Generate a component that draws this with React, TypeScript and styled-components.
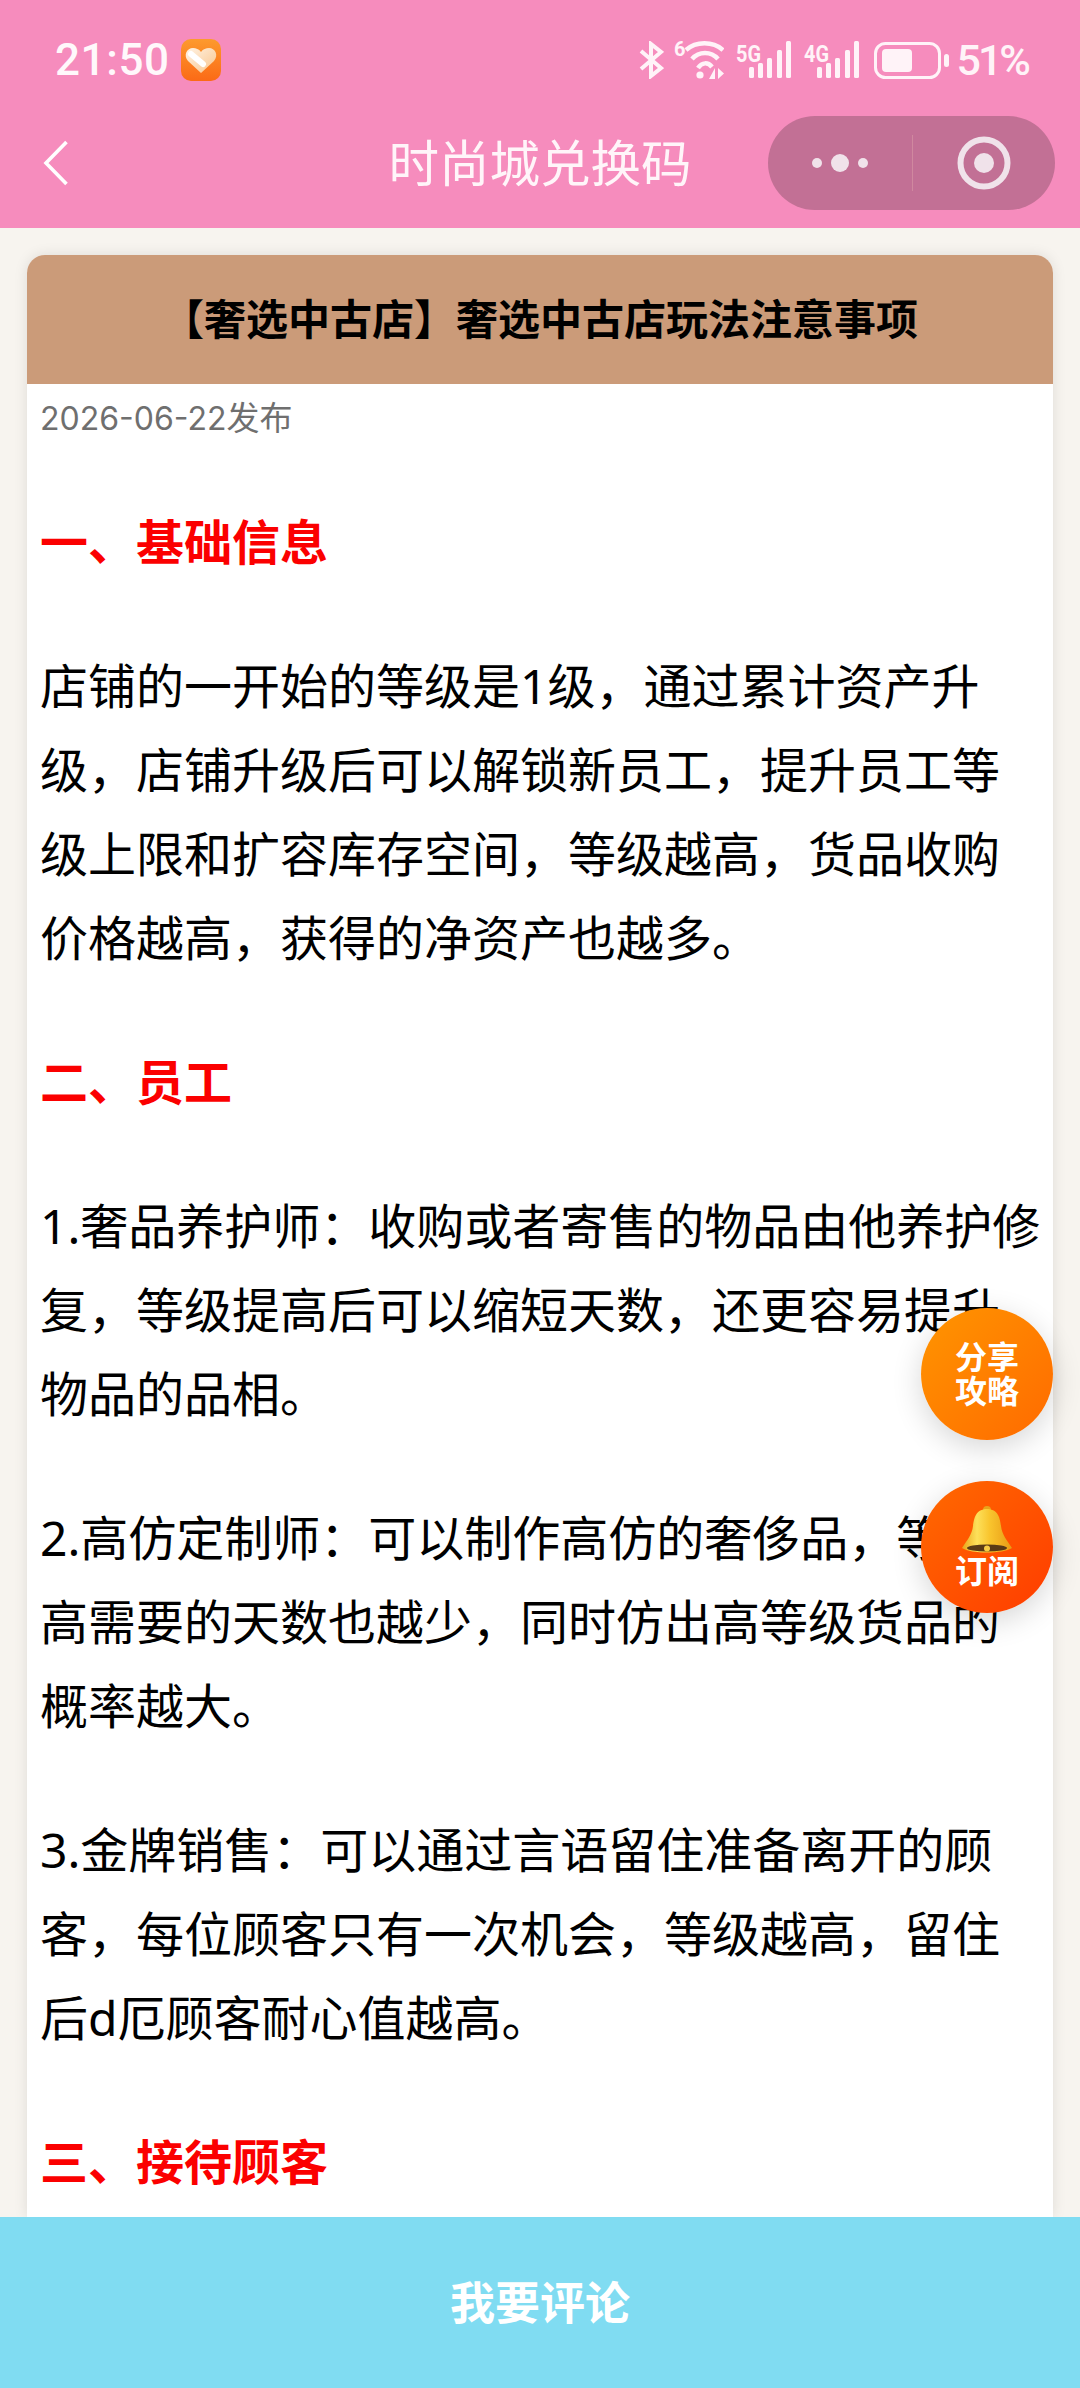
import React from 'react';
import styled, { createGlobalStyle } from 'styled-components';

const GlobalStyle = createGlobalStyle`
    html, body {
        margin: 0;
        padding: 0;
        background: #f7f4ef;
    }
    * {
        box-sizing: border-box;
    }
`;

const Page = styled('div')`
    position: relative;
    width: 1080px;
    height: 2388px;
    display: flex;
    flex-direction: column;
    overflow: hidden;
    background-color: #f7f4ef;
    font-family: 'Noto Sans', 'Noto Sans CJK SC', sans-serif;
`;

const TopArea = styled('header')`
    height: 228px;
    flex: none;
    background-color: #f68cbd;
    color: #ffffff;
`;

const StatusBar = styled('div')`
    height: 114px;
    padding: 6px 52px 0 55px;
    display: flex;
    align-items: center;
    justify-content: space-between;
`;

const TimeGroup = styled('div')`
    display: flex;
    align-items: center;
    gap: 11px;
`;

const Time = styled('span')`
    font-family: 'Roboto', sans-serif;
    font-size: 44px;
    font-weight: 500;
    letter-spacing: 0.6px;
    color: #fff8fb;
`;

const StatusIcons = styled('div')`
    display: flex;
    align-items: center;
`;

const IconSlot = styled('span')<{ $gap: number }>`
    display: flex;
    margin-left: ${(p) => p.$gap}px;
`;

const Percent = styled('span')`
    font-family: 'Roboto', sans-serif;
    font-size: 43px;
    font-weight: 500;
    letter-spacing: -3px;
    color: #fff3f8;
    margin-left: 7px;
`;

const NavBar = styled('div')`
    height: 114px;
    padding: 0 25px 16px;
    display: grid;
    grid-template-columns: 1fr auto 1fr;
    align-items: center;
`;

const BackLink = styled('span')`
    display: flex;
    margin-left: 18px;
`;

const NavTitle = styled('h1')`
    margin: 0;
    font-size: 50.5px;
    font-weight: 400;
    line-height: 60px;
    color: #fff5f9;
`;

const Capsule = styled('div')`
    justify-self: end;
    width: 287px;
    height: 94px;
    border-radius: 47px;
    background-color: #c27095;
    display: grid;
    grid-template-columns: 144px 1px 1fr;
    align-items: center;
    justify-items: center;
`;

const CapsuleLine = styled('span')`
    width: 1px;
    height: 56px;
    background-color: #d0889f;
`;

const Card = styled('main')`
    flex: 1;
    min-height: 0;
    margin: 27px 27px 0;
    border-radius: 18px 18px 0 0;
    background-color: #ffffff;
    box-shadow: 0 0 14px rgba(0, 0, 0, 0.1);
    overflow: hidden;
`;

const CardHeader = styled('div')`
    height: 129px;
    padding-bottom: 6px;
    background-color: #cb9b79;
    display: flex;
    align-items: center;
    justify-content: center;
`;

const CardTitle = styled('h2')`
    margin: 0;
    font-size: 42px;
    font-weight: 700;
    color: #000000;
`;

const Body = styled('div')`
    padding: 12px 8px 0 13px;
`;

const DateLine = styled('div')`
    font-size: 33px;
    line-height: 44px;
    color: #6f6f6f;
    margin-bottom: 59px;
`;

const DateDigits = styled('span')`
    font-family: 'Inter', sans-serif;
    font-size: 32px;
`;

const Heading = styled('h3')`
    margin: 0 0 60px;
    font-size: 48px;
    font-weight: 700;
    line-height: 84px;
    color: #fb0000;
`;

const Paragraph = styled('p')`
    margin: 0 0 60px;
    font-size: 48px;
    line-height: 84px;
    color: #000000;
`;

const BottomBar = styled('div')`
    height: 171px;
    flex: none;
    padding-bottom: 4px;
    background-color: #80dcf2;
    color: #ffffff;
    font-size: 45px;
    font-weight: 700;
    display: flex;
    align-items: center;
    justify-content: center;
`;

const FloatButton = styled('div')<{ $top: number; $from: string; $to: string }>`
    position: absolute;
    right: 27px;
    top: ${(p) => p.$top}px;
    width: 132px;
    height: 132px;
    padding-bottom: 1px;
    border-radius: 50%;
    background: linear-gradient(135deg, ${(p) => p.$from}, ${(p) => p.$to});
    box-shadow: 0 8px 30px rgba(0, 0, 0, 0.16);
    color: #ffffff;
    font-size: 32px;
    font-weight: 700;
    line-height: 34px;
    display: flex;
    flex-direction: column;
    align-items: center;
    justify-content: center;
    text-align: center;
`;

const BackIcon = () => (
    <svg width="25" height="46" viewBox="0 0 25 46" fill="none">
        <path d="M23.5 2 L3 23 L23.5 44" stroke="#fff" strokeWidth="3.6" />
    </svg>
);

const HeartLogo = () => (
    <svg width="40" height="42" viewBox="0 0 40 42">
        <defs>
            <linearGradient id="logoBg" x1="0" y1="0" x2="0" y2="1">
                <stop offset="0" stopColor="#fd9a2e" />
                <stop offset="1" stopColor="#fb6a16" />
            </linearGradient>
            <linearGradient id="logoHeart" x1="0" y1="0" x2="1" y2="1">
                <stop offset="0" stopColor="#fff3e4" />
                <stop offset="1" stopColor="#f8c48c" />
            </linearGradient>
        </defs>
        <rect width="40" height="42" rx="10" fill="url(#logoBg)" />
        <path
            d="M20 34 L7 22 C2 16 6 9 12 9 C15 9 18 10 20 13 C22 10 25 9 28 9 C34 9 38 16 33 22 Z"
            fill="url(#logoHeart)"
        />
        <path d="M10 15 L22 25" stroke="#ffffff" strokeWidth="6" strokeLinecap="round" />
    </svg>
);

const Bluetooth = () => (
    <svg width="25" height="38" viewBox="0 0 25 38" fill="none">
        <path d="M2 10 L22 27 L12 35 V3 L22 11 L2 28" stroke="#fff3f8" strokeWidth="4" />
    </svg>
);

const Wifi = () => (
    <svg width="51" height="40" viewBox="0 0 51 40" fill="none">
        <text x="1" y="16" fontSize="20" fontWeight="700" fontFamily="Roboto" fill="#fff3f8">
            6
        </text>
        <path d="M13 10 C23 1 40 1 50 10" stroke="#fff3f8" strokeWidth="4.5" />
        <path d="M19 19 C26 11 38 11 45 19" stroke="#fff3f8" strokeWidth="4.5" />
        <path d="M25 28 C29 22 35 22 39 27" stroke="#fff3f8" strokeWidth="4.5" />
        <circle cx="27" cy="35" r="3.6" fill="#fff3f8" />
        <path d="M42 28 V39 H36 Z M45 28 V39 L51 33.5 Z" fill="#fff3f8" />
    </svg>
);

const Signal = ({ label }: { label: string }) => (
    <svg width="57" height="38" viewBox="0 0 57 38">
        <text
            x="1"
            y="21"
            fontSize="24"
            fontWeight="700"
            fontFamily="Roboto"
            fill="#fff3f8"
            textLength="25"
            lengthAdjust="spacingAndGlyphs"
        >
            {label}
        </text>
        <rect x="14" y="26" width="5" height="11" rx="1.5" fill="#fff3f8" />
        <rect x="23" y="22" width="5" height="15" rx="1.5" fill="#fff3f8" />
        <rect x="32" y="17" width="5" height="20" rx="1.5" fill="#fff3f8" />
        <rect x="42" y="9" width="5" height="28" rx="1.5" fill="#fff3f8" />
        <rect x="51" y="0" width="5" height="37" rx="1.5" fill="#fff3f8" />
    </svg>
);

const Battery = () => (
    <svg width="75" height="37" viewBox="0 0 75 37" fill="none">
        <rect x="1.5" y="1.5" width="64" height="34" rx="10" stroke="#fff3f8" strokeWidth="3" />
        <rect x="8" y="7" width="30" height="23" rx="4" fill="#fff3f8" />
        <rect x="70" y="12" width="5" height="13" rx="2.5" fill="#fff3f8" />
    </svg>
);

const MoreDots = () => (
    <svg width="56" height="20" viewBox="0 0 56 20" fill="#f0e2ea">
        <circle cx="5" cy="10" r="5" />
        <circle cx="28" cy="10" r="9" />
        <circle cx="51" cy="10" r="5" />
    </svg>
);

const RecordIcon = () => (
    <svg width="54" height="54" viewBox="0 0 54 54" fill="none">
        <circle cx="27" cy="27" r="23.5" stroke="#f0e2ea" strokeWidth="6" />
        <circle cx="27" cy="27" r="10" fill="#f0e2ea" />
    </svg>
);

const Bell = () => (
    <svg width="50" height="48" viewBox="0 0 50 48">
        <defs>
            <linearGradient id="bellBody" x1="0" y1="0" x2="1" y2="0">
                <stop offset="0" stopColor="#e9a51a" />
                <stop offset="0.3" stopColor="#fde05a" />
                <stop offset="0.55" stopColor="#f9c52e" />
                <stop offset="1" stopColor="#e89a14" />
            </linearGradient>
        </defs>
        <circle cx="25" cy="4" r="4" fill="#e9a31c" />
        <path
            d="M25 3 C14 3 12 12 11 20 C10 29 5 34 0 42 C9 48 41 48 50 42 C45 34 40 29 39 20 C38 12 36 3 25 3 Z"
            fill="url(#bellBody)"
        />
        <ellipse cx="25" cy="42" rx="20" ry="3.6" fill="#5a3a16" />
        <circle cx="25" cy="42.5" r="3" fill="#f6cc45" />
    </svg>
);

const App = () => {
    return (
        <Page>
            <GlobalStyle />
            <TopArea>
                <StatusBar>
                    <TimeGroup>
                        <Time>21:50</Time>
                        <HeartLogo />
                    </TimeGroup>
                    <StatusIcons>
                        <Bluetooth />
                        <IconSlot $gap={9}>
                            <Wifi />
                        </IconSlot>
                        <IconSlot $gap={11}>
                            <Signal label="5G" />
                        </IconSlot>
                        <IconSlot $gap={11}>
                            <Signal label="4G" />
                        </IconSlot>
                        <IconSlot $gap={14}>
                            <Battery />
                        </IconSlot>
                        <Percent>51%</Percent>
                    </StatusIcons>
                </StatusBar>
                <NavBar>
                    <BackLink>
                        <BackIcon />
                    </BackLink>
                    <NavTitle>时尚城兑换码</NavTitle>
                    <Capsule>
                        <MoreDots />
                        <CapsuleLine />
                        <RecordIcon />
                    </Capsule>
                </NavBar>
            </TopArea>
            <Card>
                <CardHeader>
                    <CardTitle>【奢选中古店】奢选中古店玩法注意事项</CardTitle>
                </CardHeader>
                <Body>
                    <DateLine>
                        <DateDigits>2026-06-22</DateDigits>发布
                    </DateLine>
                    <Heading>一、基础信息</Heading>
                    <Paragraph>
                        店铺的一开始的等级是1级，通过累计资产升级，店铺升级后可以解锁新员工，提升员工等级上限和扩容库存空间，等级越高，货品收购价格越高，获得的净资产也越多。
                    </Paragraph>
                    <Heading>二、员工</Heading>
                    <Paragraph>
                        1.奢品养护师：收购或者寄售的物品由他养护修复，等级提高后可以缩短天数，还更容易提升物品的品相。
                    </Paragraph>
                    <Paragraph>
                        2.高仿定制师：可以制作高仿的奢侈品，等级越高需要的天数也越少，同时仿出高等级货品的概率越大。
                    </Paragraph>
                    <Paragraph>
                        3.金牌销售：可以通过言语留住准备离开的顾客，每位顾客只有一次机会，等级越高，留住后d厄顾客耐心值越高。
                    </Paragraph>
                    <Heading>三、接待顾客</Heading>
                </Body>
            </Card>
            <BottomBar>我要评论</BottomBar>
            <FloatButton $top={1308} $from="#ff9500" $to="#ff6a00">
                <span>分享</span>
                <span>攻略</span>
            </FloatButton>
            <FloatButton $top={1481} $from="#ff6a00" $to="#ff3c00">
                <Bell />
                <span>订阅</span>
            </FloatButton>
        </Page>
    );
};

export default App;
